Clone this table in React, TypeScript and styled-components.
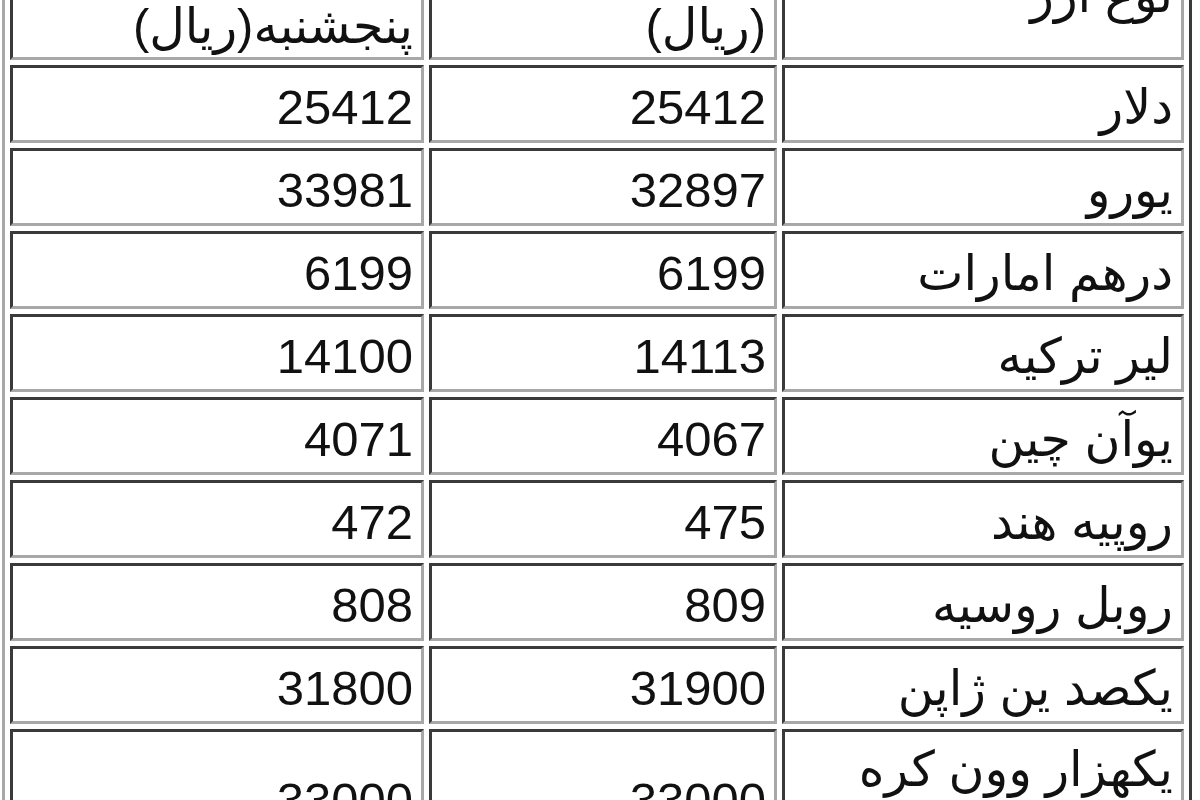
import styled, { createGlobalStyle } from 'styled-components'

const GlobalStyle = createGlobalStyle`
  html, body {
    margin: 0;
    padding: 0;
    background: #fff;
  }
`

const Page = styled.div`
  width: 1200px;
  height: 800px;
  overflow: hidden;
  background: #fff;
`

const RateTable = styled.table`
  direction: rtl;
  margin: -82px 0 0 2px;
  width: 1190px;
  table-layout: fixed;
  border-collapse: separate;
  border-spacing: 5px;
  border-style: solid;
  border-width: 3px;
  border-color: #a8a8a8 #3a3a3a #3a3a3a #a8a8a8;
  font-family: 'Liberation Sans', 'DejaVu Sans', sans-serif;
  font-size: 49px;
  color: #111;
`

const Cell = styled.td<{ $w?: number }>`
  ${({ $w }) => ($w ? `width: ${$w}px;` : '')}
  height: 66px;
  padding: 6px 8px 0 8px;
  text-align: right;
  vertical-align: middle;
  line-height: 62px;
  border-style: solid;
  border-width: 3px;
  border-color: #3a3a3a #a8a8a8 #a8a8a8 #3a3a3a;
  background: #fff;
`

const HeadCell = styled(Cell)`
  height: auto;
  padding-top: 4px;
`

interface Rate {
  name: string
  wed: string
  thu: string
}

const rates: Rate[] = [
  { name: 'دلار', wed: '25412', thu: '25412' },
  { name: 'یورو', wed: '32897', thu: '33981' },
  { name: 'درهم امارات', wed: '6199', thu: '6199' },
  { name: 'لیر ترکیه', wed: '14113', thu: '14100' },
  { name: 'یوآن چین', wed: '4067', thu: '4071' },
  { name: 'روپیه هند', wed: '475', thu: '472' },
  { name: 'روبل روسیه', wed: '809', thu: '808' },
  { name: 'یکصد ین ژاپن', wed: '31900', thu: '31800' },
  { name: 'یکهزار وون کره جنوبی', wed: '33000', thu: '33000' },
]

export default function App() {
  return (
    <Page>
      <GlobalStyle />
      <RateTable>
        <tbody>
          <tr>
            <HeadCell $w={380}>نوع ارز</HeadCell>
            <HeadCell $w={326}>
              قیمت چهارشنبه
              <br />
              (ریال)
            </HeadCell>
            <HeadCell>
              قیمت روز
              <br />
              پنجشنبه(ریال)
            </HeadCell>
          </tr>
          {rates.map((r) => (
            <tr key={r.name}>
              <Cell>{r.name}</Cell>
              <Cell>{r.wed}</Cell>
              <Cell>{r.thu}</Cell>
            </tr>
          ))}
        </tbody>
      </RateTable>
    </Page>
  )
}
